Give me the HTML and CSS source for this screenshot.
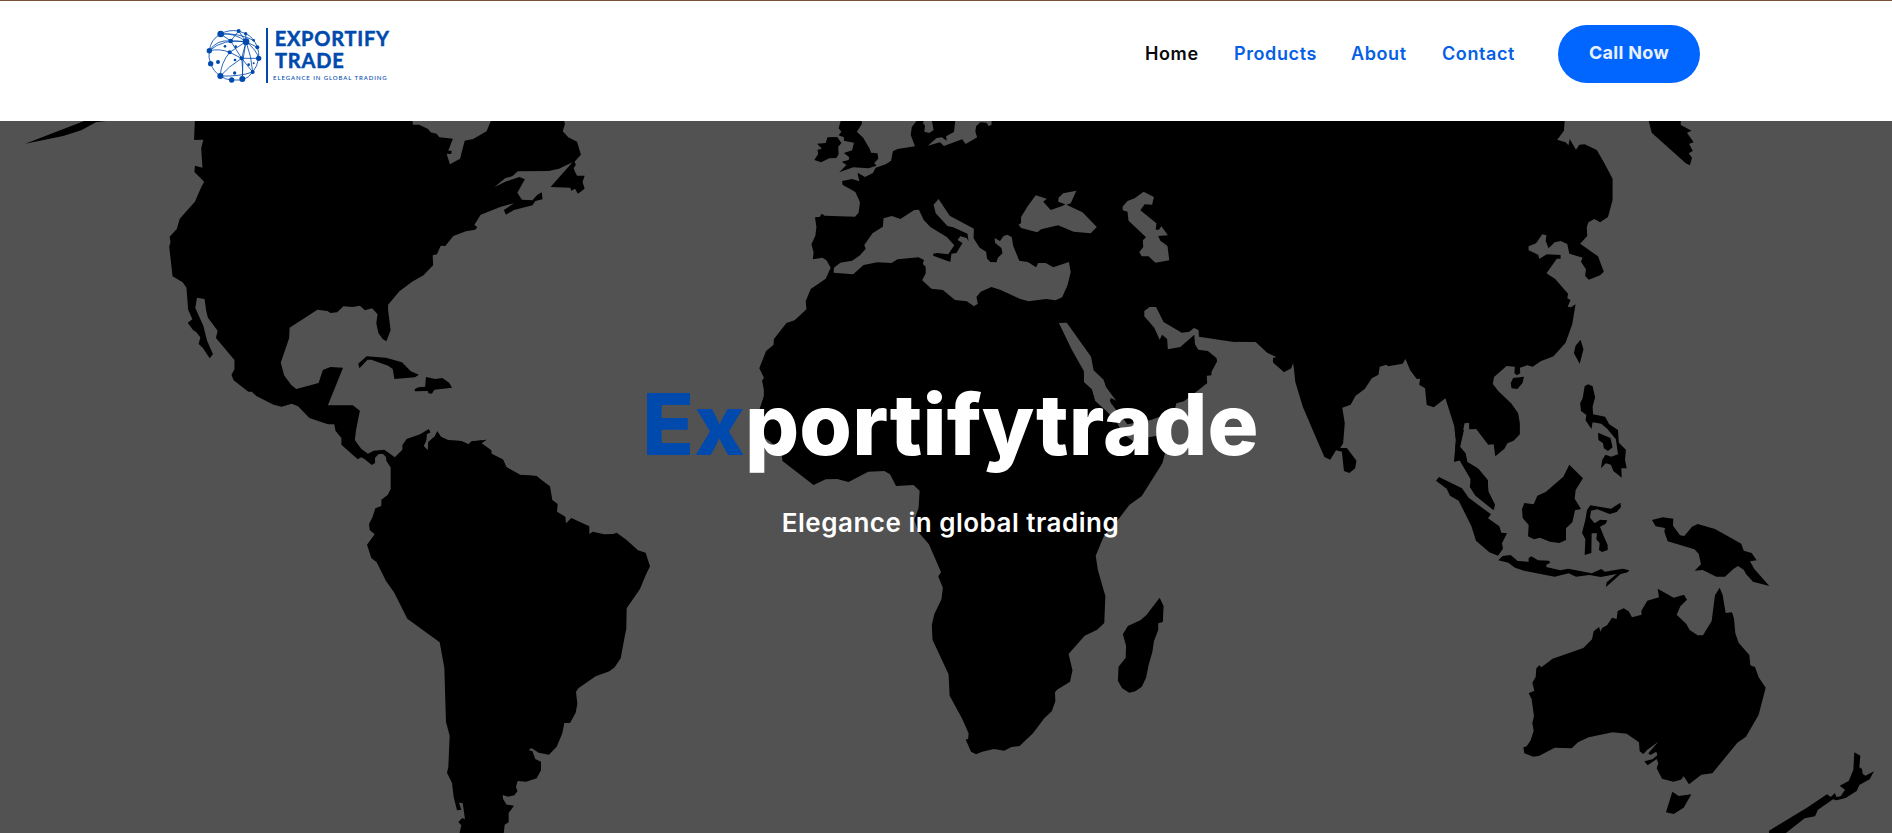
FILE: index.html
```html
<!DOCTYPE html>
<html lang="en">
<head>
<meta charset="utf-8">
<title>Exportifytrade</title>
<link rel="stylesheet" href="styles.css">
</head>
<body>
<header class="header">
  <a class="logo" href="#" aria-label="Exportify Trade">
    <svg class="logo-art" viewBox="0 0 660 270">
      <g class="globe-lines">
        <path d="M92 72Q62 88 58 122Q54 142 62 161Q70 184 91 198Q106 209 125 210H157Q178 203 188 186Q202 170 206 145Q208 127 202 112Q192 82 167 71L146 63Q115 58 92 72"/>
        <path d="M92 72Q135 68 168 95M92 72L122 93L168 95L202 112M92 72Q145 68 191 91M58 122Q80 88 122 93M58 122Q100 85 168 95M58 122Q90 115 119 127L168 95M119 127L155 145L206 145M119 127Q92 160 91 198M122 93L155 145L188 186M91 198Q115 170 155 145L168 95L146 63M122 93L146 63M168 95Q155 150 157 207M168 95Q185 140 188 186M168 95Q200 120 206 145M91 198Q150 200 188 186M155 145Q160 180 157 207M167 71L168 95"/>
      </g>
      <g class="globe-dots">
        <circle cx="92" cy="72" r="10"/><circle cx="146" cy="63" r="6"/><circle cx="167" cy="71" r="5"/><circle cx="122" cy="93" r="7"/><circle cx="168" cy="95" r="10"/><circle cx="202" cy="112" r="6"/><circle cx="58" cy="122" r="8"/><circle cx="119" cy="127" r="6"/><circle cx="105" cy="109" r="4"/><circle cx="137" cy="110" r="4"/><circle cx="155" cy="145" r="6"/><circle cx="206" cy="145" r="8"/><circle cx="62" cy="161" r="8"/><circle cx="84" cy="156" r="6"/><circle cx="135" cy="150" r="4"/><circle cx="176" cy="164" r="4"/><circle cx="191" cy="160" r="3"/><circle cx="188" cy="186" r="6"/><circle cx="91" cy="198" r="9"/><circle cx="134" cy="189" r="5"/><circle cx="125" cy="210" r="8"/><circle cx="157" cy="207" r="9"/><circle cx="191" cy="91" r="4"/>
      </g>
      <rect class="logo-bar" x="228" y="54" width="6" height="165"/>
      <text class="logo-name" x="254" y="108" textLength="343">EXPORTIFY</text>
      <text class="logo-name" x="255" y="173" textLength="206">TRADE</text>
      <text class="logo-tag" x="249" y="210" textLength="341">ELEGANCE IN GLOBAL TRADING</text>
    </svg>
  </a>
  <nav class="nav">
    <a class="nav-link active" href="#">Home</a>
    <a class="nav-link products" href="#">Products</a>
    <a class="nav-link about" href="#">About</a>
    <a class="nav-link contact" href="#">Contact</a>
    <a class="call-button" href="#">Call Now</a>
  </nav>
</header>
<main class="hero">
  <svg class="map" viewBox="0 121 1892 712" aria-hidden="true">
    <!-- North and Central America -->
    <g transform="translate(0 110) scale(.42092 .33333)">
      <path d="M60 101L200 33H252L228 37L193 61L150 78Z"/>
      <path d="M463 30L461 90L483 89L478 115L481 173L463 167L462 186L485 215L478 232L463 275L427 326L420 357L403 380L405 396L402 410L410 499L434 517L443 533L447 599L457 628L446 638L459 661L466 666L476 682L472 702L482 714L498 745L506 733L492 692L483 647L464 594L468 563L486 567L490 604L494 623L517 662L513 684L557 750V778L550 794L555 811L590 845H598L609 858L650 884L669 890L693 881L708 889L735 924L779 943H794L797 962L811 984V1004L850 1048L858 1042L866 1047L883 1065L891 1059V1043L900 1032H910L917 1041L918 1053L929 1074V1110H1285L1275 1098L1236 1095L1203 1072L1194 1048L1167 1031L1165 1020L1144 1002L1125 998L1156 989L1120 994L1113 1003L1096 993L1063 991L1046 980L1039 964L1033 979L1018 995L1017 1021L1006 1009L1013 991L1014 973L1022 966L1018 958L998 973L967 987L956 1005V1019L938 1042L913 1019L888 1022L874 1031L858 1016L843 990L846 959L855 902L838 886H779L815 773L785 771L767 780L757 819L704 837L692 825L675 796L667 758L687 684L688 653L754 599L778 603L785 609L801 607L816 589L838 591L855 587L867 601L884 595L897 613L894 640L899 669L909 687L918 694L928 661L922 599V584L949 544L979 515L1006 496L1029 466L1028 436L1038 433L1047 407L1058 408L1077 378L1107 364L1129 359L1134 352L1127 344L1142 314L1190 290L1221 280L1197 300L1202 314L1221 300L1265 286L1272 273L1289 268L1287 247L1276 255L1265 271L1240 269L1229 248L1247 208L1234 201L1203 214L1175 231L1200 205L1218 198L1230 184L1304 183L1328 176L1360 157L1308 231L1355 233L1357 242L1366 236L1373 251L1389 236L1384 216L1389 197H1371L1366 185L1363 175L1368 164L1365 155L1380 134L1371 95L1350 82L1337 64L1342 43L1340 30H1167L1156 64L1124 87L1104 92L1093 146L1069 163L1061 131L1072 132L1073 122H1065L1076 86L1044 82L1037 71L1023 67L1017 57L996 44H981L980 30Z"/>
      <path d="M854 775L851 761L871 739L917 743L955 757L976 784L995 794L986 802L937 807L933 777L922 767L882 749H873ZM1012 801L1034 807L1051 804L1067 818L1074 833L1032 839L1026 851L1018 850L1016 843L986 844L985 838L994 832L1010 830Z"/>
    </g>
    <!-- South America -->
    <g transform="translate(340 400) scale(.33333)">
      <path d="M152 203V267L143 285L124 299V318L106 325L98 350L87 372L89 390L104 403L81 434L94 474L110 487L138 543L162 577L202 656L299 727L313 803L318 966L329 1007L325 1100L321 1118L336 1149L341 1191L351 1231L364 1229L357 1208L368 1209L375 1258L367 1254L355 1266L364 1276L358 1302H491L494 1274L506 1267V1239L522 1217L500 1214L489 1196L488 1185L504 1190L523 1186L532 1174L528 1160L533 1143L558 1145L590 1135L603 1111V1085L586 1077L577 1053L566 1051L574 1044L596 1058L627 1064L650 1040L667 1000L673 969H690L707 938L712 911L708 875L716 864L767 829L808 814L824 802L842 775L854 710L859 686L860 625L900 567L917 526L930 499L917 458L894 451L859 419L830 398L820 402L793 403L758 395L748 402V379L694 354L678 370L676 350L651 335L653 312L637 300L630 259L589 228L540 224L499 201L490 180L455 161L454 151L425 130L440 119L394 125L387 134L364 123L326 121L303 110L292 94L286 109L265 127L263 152L251 137L258 121L259 101L271 98L267 88L241 105L200 117L189 134V149L164 174Z"/>
    </g>
    <!-- Europe, North Africa and West Asia -->
    <g transform="translate(740 110) scale(.35714 .33333)">
      <path d="M705 30L704 44L697 49L690 38L673 37L661 49L659 65L664 82L632 102L622 88L571 108L560 97L526 107L540 94L551 84L565 82L579 92L577 79L599 66L603 30H537L542 60L530 69L516 65L518 47L512 39L515 33H494L481 51L478 75L490 109L441 117L428 124L423 152L408 163L380 173L372 189L350 201L329 188L334 214L314 207L286 213L287 224L323 246L336 277L332 308L322 320L237 317L229 311L223 321L210 322L214 351L211 377L200 403L206 427L204 448L231 443L242 451L254 473L240 506L198 537L184 573L186 598L153 631L130 639L95 687L94 704L73 723L54 775L67 803L62 812L67 840V860L54 900H1021L994 872L985 838L963 817V784L928 717L893 639L915 638L983 740L990 781L1021 812L1025 831L1055 874L1042 866L1035 870L1054 900H1217L1222 880L1243 874L1290 835L1308 819L1307 797L1320 796V786L1336 754L1334 744L1310 723L1283 719L1274 703L1272 674L1233 711L1198 718L1196 687L1182 674L1175 689L1160 653L1132 619V603L1147 591H1165L1186 636L1205 648L1237 668L1258 665L1271 654L1284 660L1285 680L1383 696L1443 694L1475 727L1503 742L1493 744V758L1523 786L1543 774L1549 757L1560 830L1570 860V30Z"/>
      <path class="sea" d="M262 488L263 473L281 458L314 452L336 436L352 416L348 405L371 370L400 350L402 325L425 318L449 327L488 300L501 299L514 329L533 351L579 381L600 406L583 433L552 429L541 431V437L589 456L592 431L606 429L623 399L609 390L617 379L635 384L640 394L637 371L597 352L581 348L548 310L542 284L556 267L587 317L655 356L654 385L671 413L689 425L692 446L701 456L718 457L722 443L735 430L732 414L714 398L713 384L728 393L738 378L749 374L761 382L765 408L782 452L806 456L829 472L835 459L856 459L877 472L921 456L926 487L917 526L902 562L884 571L857 567L808 574L783 566L730 540L704 531L674 545L662 561L666 581L655 589L635 574L602 570L568 540L536 536L510 511L520 490V470L512 462L515 450L500 442L441 448L424 459L385 457L346 465L317 493Z"/>
      <path class="sea" d="M780 344L787 339V321L806 288L828 256L859 266L849 275L870 300L904 287L911 283L891 275L892 263L905 250L942 242L926 280L914 284L959 307L999 351L982 370L934 365L891 346L843 358L832 367L787 354ZM1085 305L1072 301L1071 290L1085 273L1105 265L1130 245L1159 261L1154 284L1133 283L1121 301L1166 340L1164 359H1173L1180 349L1198 376L1171 378L1177 392L1197 408L1202 451L1163 458L1144 439L1125 439L1118 427L1129 411L1128 391L1137 382L1088 332Z"/>
      <path d="M282 33H341V43L327 65L345 83L363 116L367 128L385 130L387 146L376 159L382 167L360 175L317 172L278 187L298 165L285 155L304 150L306 142L291 129L314 121L319 98L291 92V82L276 76L284 65L276 55ZM245 82L272 81L284 99L275 110L276 133L270 144L250 145L227 157L208 150L219 132L217 119L229 116L216 101L240 99Z"/>
    </g>
    <!-- Africa and Madagascar -->
    <g transform="translate(740 380) scale(.35714 .33333)">
      <path d="M62 0L67 15V48L55 90L56 165L85 185L115 215L119 243L206 315L240 298L272 297L304 306L359 275L404 273L420 283L437 318L486 315L503 332L500 384L488 420L500 457L529 493L563 577L555 589L568 623L564 658L544 703L537 735L539 779L584 883L587 947L621 1014L640 1060L639 1076L632 1079L647 1115L661 1123L678 1115L711 1107L740 1112L760 1101L783 1098L821 1059L852 1015L873 994L883 964L882 937L888 929L924 905L931 871L920 822L965 767L1000 749L1020 729L1023 648L1002 570L996 527L1018 470L1058 420L1090 375L1125 348L1183 249L1204 160L1145 172L1100 183L1070 160L1055 126L1025 92L994 63L985 29L963 7V0Z"/>
      <path d="M1018 0L1025 20L1055 64L1038 54L1037 67L1060 99L1085 133L1150 120L1215 95L1220 67L1240 61L1290 22L1307 10V0Z"/>
      <path d="M1175 653L1186 678L1184 726L1171 730V750L1159 784L1155 814L1144 856L1137 893L1125 920L1107 934L1090 938L1070 925L1058 902L1060 860L1080 833L1081 797L1072 763L1086 738L1121 721L1138 705Z"/>
    </g>
    <!-- South and East Asia, the Philippines -->
    <g transform="translate(1240 110) scale(.41582 .33333)">
      <path d="M0 30V695L38 696L66 728L90 742L80 744L79 754L106 786L123 775L128 757L133 816L151 890L180 975L203 1041L217 1049L231 1021L245 1025L250 1083L263 1089L277 1075L280 1052L257 1014L241 1014L248 1000L252 940L246 893L266 884L278 857L300 837L317 805L333 794L336 770L352 764L356 769L391 761L398 747L409 780L425 807L433 806L431 824L445 835L449 885L466 892L494 865L515 947L519 990L515 1056L528 1051L554 1106V1131L567 1158L609 1200L613 1184L597 1144L596 1110L572 1075L547 1056L543 1032L529 1011L540 940L551 938V958L568 957L597 1004L610 1003L614 1039L636 1016L643 1000L658 992L673 973V940L669 910L652 880L621 843L608 822L611 801L641 768L661 770L660 790L666 796L674 790L673 773L691 766L704 770L723 754L754 739L783 698L799 643L807 583L796 592L788 590L795 570L787 565L789 551L758 507L737 490L762 446H771V435L738 433L720 446L717 434L694 421V409L712 400L727 373L737 376L735 392L742 415L757 397L771 393L787 402L792 431L824 443L820 455L832 478L830 498L839 509L866 496L875 485L861 439L818 401L835 378L834 352L838 337L852 327L866 337L885 321L896 270V206L877 161L858 120L829 103L816 104L808 119L793 87L790 106L783 97L763 89L779 62L781 30Z"/>
      <path d="M983 33H1060V45L1086 62L1075 68L1091 97L1080 101L1089 123L1079 130L1087 143L1082 166L1072 160L990 68ZM819 689L826 718L817 761L803 730L807 707ZM657 804L683 800L679 820L667 837L653 835L651 819ZM838 823L848 829L854 862L848 890L849 913L878 920L888 943L909 960L911 998L928 1019L926 1050L930 1075H917L918 1103L898 1083L892 1064L880 1060L868 1075L871 1050L879 1034L893 1040L909 1033L904 988L883 956L869 941L848 937L845 957L831 931L833 915L820 903L818 880L824 865L829 828ZM861 968L891 984L896 1012L885 1023L875 1015L873 1000L862 990Z"/>
    </g>
    <!-- Indonesia, Australia and New Zealand -->
    <g transform="translate(1400 430) scale(.33333)">
      <path d="M165 0L168 30L163 94L180 91L215 149L209 170L225 195L264 222L282 240L284 223L265 185L263 152L238 120L200 96L196 69L180 50L192 0ZM117 141L186 175L206 203L273 253L264 265L298 289L304 308L321 310L306 340L309 356L294 377L268 367L228 332L214 288L176 212L150 197L140 176L108 152ZM508 104L549 145L527 180L524 206L543 237L525 241L517 277L498 295V330L478 339L450 335L420 323L402 328L384 319L386 285L368 264L366 238L373 219L401 223L412 197L437 186L490 140ZM571 226L633 236L661 218L663 231L650 246L629 252L592 238L573 242L570 263L584 280L600 269L622 271L617 281L600 290L611 318L623 345V360L606 366L597 360L599 340L589 328L591 310L575 310L574 369L554 375L556 327L546 309L556 270L561 240Z"/>
      <path d="M295 391L308 378L332 375L353 393L386 395V384L394 379L414 391L447 392L451 398L439 404V411L481 421L505 416L575 430L604 417L615 425L668 416L688 421L683 427L662 432L618 471L620 457L650 432L602 441L568 435L528 440L506 430L464 440L372 422L345 413L325 398ZM756 270L788 262L820 266L819 287L840 316L853 318L876 290L893 282L945 297L1024 341L1031 362L1055 369L1070 391L1050 394L1063 417L1108 468L1059 455L1038 432L1031 419L1014 408L1000 417L975 440H949L908 420L884 422L903 403L896 371L883 358L803 334L793 305L795 294L767 289Z"/>
      <path d="M773 476L821 503L852 494L861 509L841 529L830 554L859 582L869 600L893 616H909L935 573L945 496L959 473L968 495L977 549L996 547L1002 566L1006 610L1016 638L1048 675L1051 706L1065 711L1076 742L1097 773L1076 854L1038 920L1012 938L937 1030L904 1034L867 1063L851 1039L843 1049L820 1055L786 1046L770 1015L775 1000L770 987L743 1006L733 994L757 988L772 976L769 965L751 975L745 970L775 935L742 959L730 972L719 964L717 937L680 911L638 907L566 922L534 937L515 955L464 953L418 977L400 980L373 970L370 952L380 949L392 931L401 902L397 879L402 859L395 808L386 790L403 782L397 758L407 741L409 715L418 706L424 712L458 686L550 654L576 628L581 604L597 591L602 605L606 594L621 586L636 563L650 567L653 543L671 535L686 544L696 562L725 554L724 542L742 512L777 502ZM817 1085L836 1098L874 1093L851 1133L821 1152L798 1147ZM1363 967L1381 977L1378 1012L1386 1017L1388 1031L1396 1037L1422 1024L1409 1048L1378 1065L1370 1083L1337 1104L1310 1111L1299 1108L1254 1139L1245 1159L1214 1165L1154 1212H1107V1202L1223 1132L1281 1093L1292 1101L1305 1089L1309 1101L1322 1099L1335 1079L1319 1067L1346 1053L1360 1020Z"/>
    </g>
  </svg>
  <div class="hero-copy">
    <h1 class="title"><span class="accent">Ex</span>portifytrade</h1>
    <p class="subtitle">Elegance in global trading</p>
  </div>
</main>
</body>
</html>
```
FILE: styles.css
```css
* { box-sizing: border-box; }
body { margin: 0; height: 833px; overflow: hidden; display: flex; flex-direction: column; font-family: Inter, sans-serif; background: #fff; }
.header { height: 121px; flex: none; display: flex; align-items: flex-start; justify-content: space-between; padding: 9px 192px 0 190px; border-top: 1px solid #7a5238; }
.logo-art { display: block; width: 220px; height: 90px; }
.globe-lines { fill: none; stroke: #004aad; stroke-width: 2.5; }
.globe-dots, .logo-bar, .logo-name, .logo-tag { fill: #004aad; }
.logo-name { font: 700 60px Lato, sans-serif; stroke: #004aad; stroke-width: 1.5; }
.logo-tag { font: 500 18px Lato, sans-serif; }
.nav { display: flex; align-items: center; height: 58px; margin-top: 15px; }
.nav-link { font-size: 18px; font-weight: 600; line-height: 24px; letter-spacing: .6px; color: #0560e6; text-decoration: none; white-space: nowrap; width: 89px; flex: none; }
.nav-link.active { color: #0a0a0a; }
.nav-link.products { width: 117px; }
.nav-link.about { width: 91px; }
.nav-link.contact { width: 116px; }
.call-button { width: 142px; height: 58px; border-radius: 29px; background: #0066ff; color: #e9f1ff; font-size: 18px; font-weight: 700; line-height: 56px; text-align: center; text-decoration: none; letter-spacing: .3px; }
.hero { flex: 1; display: grid; background: #525252; }
.map, .hero-copy { grid-area: 1 / 1; }
.map { display: block; width: 1892px; height: 712px; }
.map .sea { fill: #525252; }
.hero-copy { position: relative; display: flex; flex-direction: column; align-items: center; padding: 249px 0 0 9px; color: #fff; }
.title { margin: 0; font-size: 85px; font-weight: 800; line-height: 110px; letter-spacing: .2px; }
.accent { color: #004aad; }
.subtitle { margin: 27px 0 0; font-size: 26px; font-weight: 600; line-height: 32px; letter-spacing: .5px; }
```
